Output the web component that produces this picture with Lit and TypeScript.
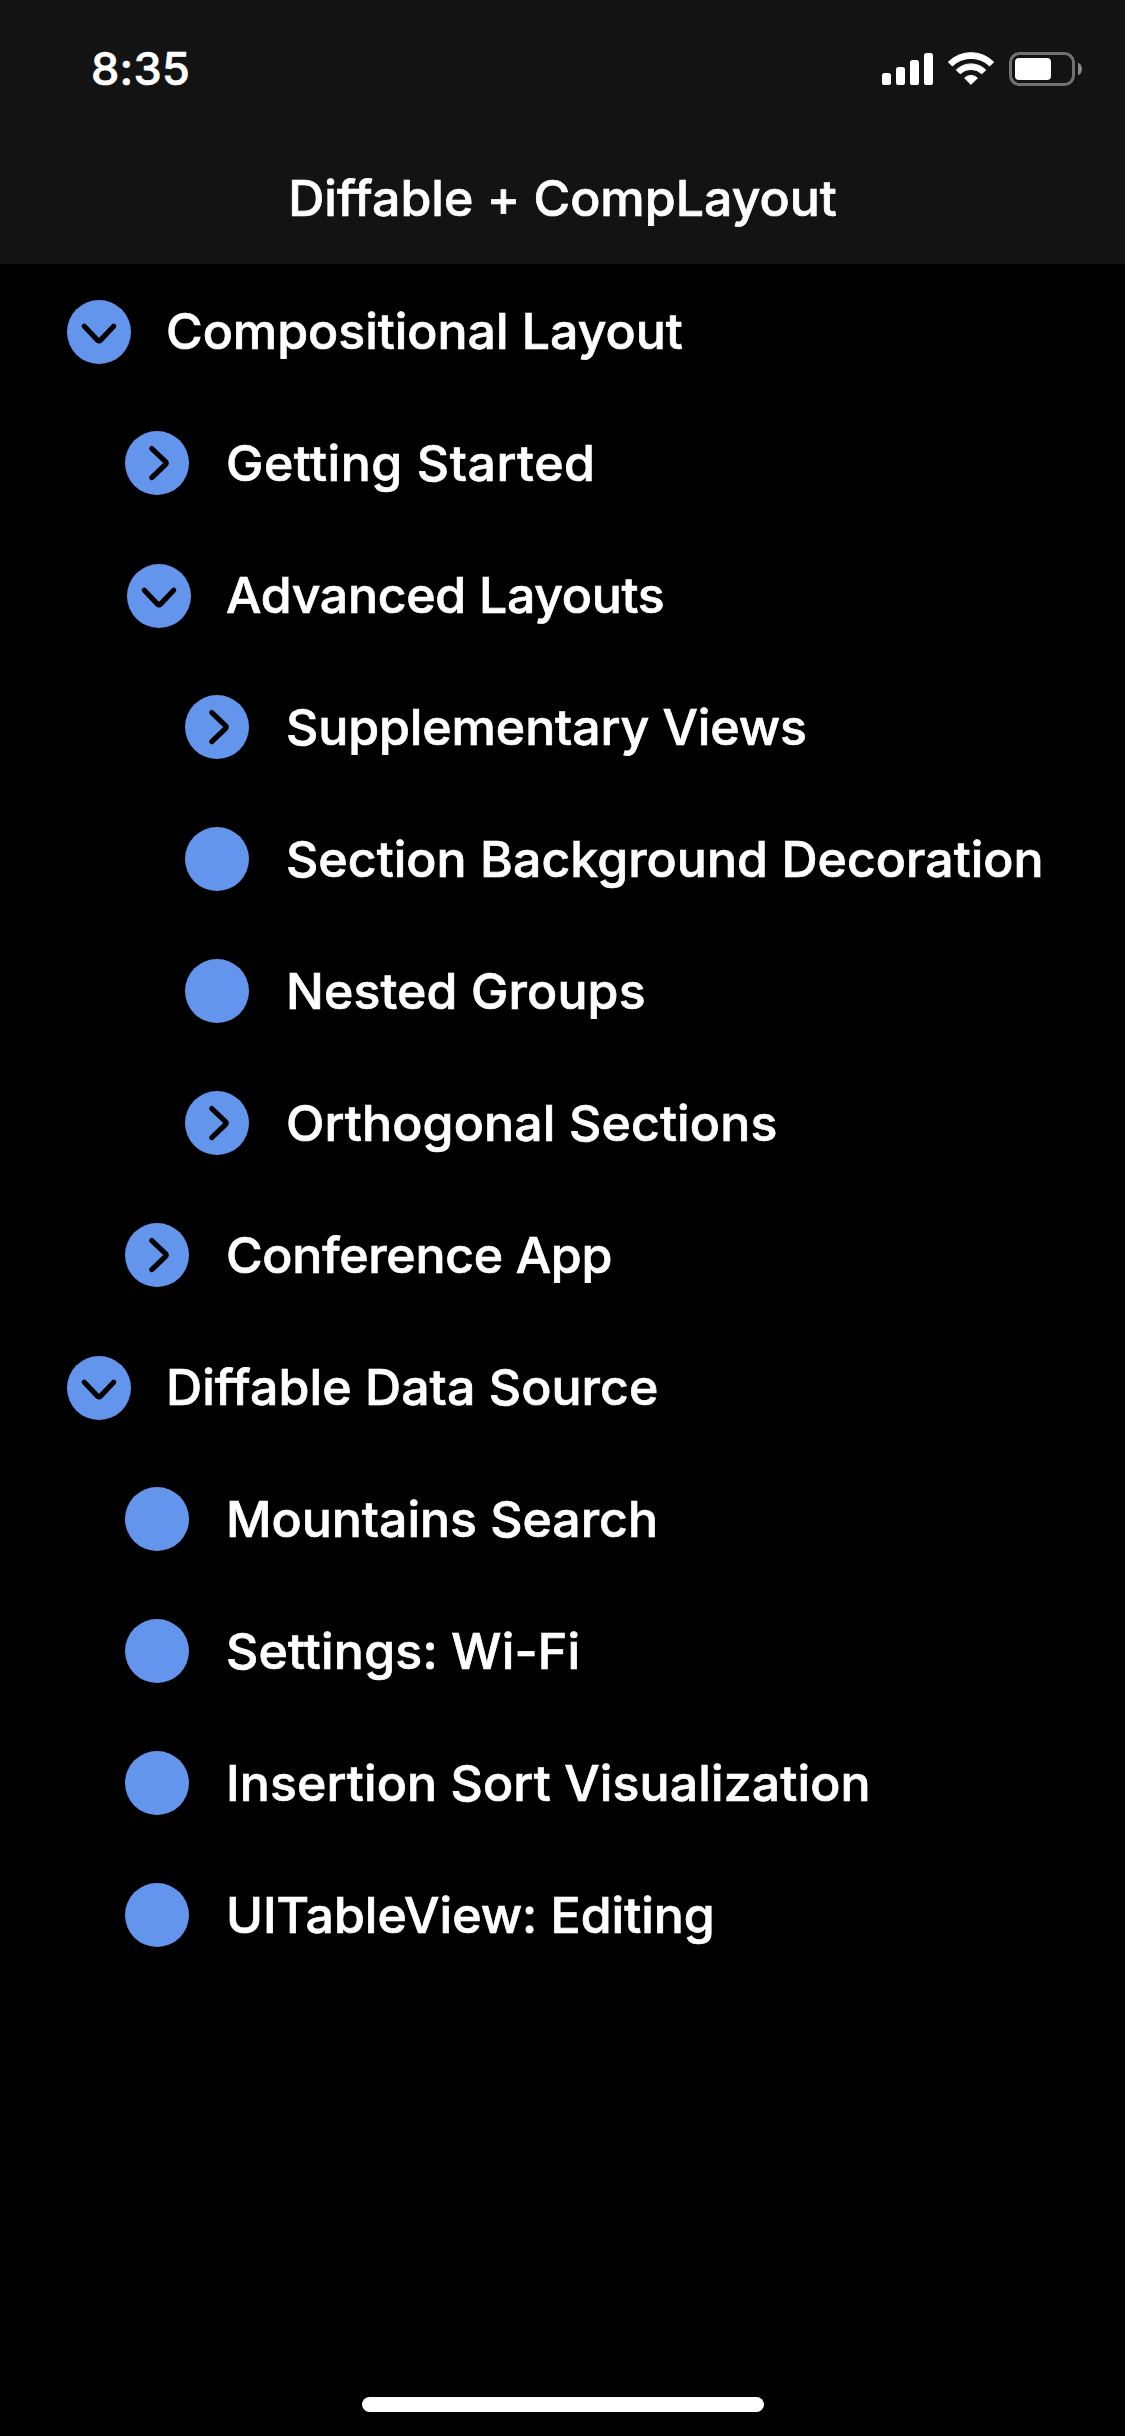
import { LitElement, html, css, svg } from "lit";
import { customElement, property } from "lit/decorators.js";
import { classMap } from "lit/directives/class-map.js";
import { styleMap } from "lit/directives/style-map.js";

type Kind = "expanded" | "collapsed" | "leaf";

interface OutlineItem {
  title: string;
  level: number;
  kind: Kind;
  tracking: number;
}

const ITEMS: OutlineItem[] = [
  { title: "Compositional Layout", level: 0, kind: "expanded", tracking: -0.02 },
  { title: "Getting Started", level: 1, kind: "collapsed", tracking: 0.55 },
  { title: "Advanced Layouts", level: 1, kind: "expanded", tracking: -0.3 },
  { title: "Supplementary Views", level: 2, kind: "collapsed", tracking: -0.1 },
  { title: "Section Background Decoration", level: 2, kind: "leaf", tracking: 0.04 },
  { title: "Nested Groups", level: 2, kind: "leaf", tracking: 0.12 },
  { title: "Orthogonal Sections", level: 2, kind: "collapsed", tracking: 0.14 },
  { title: "Conference App", level: 1, kind: "collapsed", tracking: -0.33 },
  { title: "Diffable Data Source", level: 0, kind: "expanded", tracking: 0.07 },
  { title: "Mountains Search", level: 1, kind: "leaf", tracking: -0.03 },
  { title: "Settings: Wi-Fi", level: 1, kind: "leaf", tracking: 0.19 },
  { title: "Insertion Sort Visualization", level: 1, kind: "leaf", tracking: 0.12 },
  { title: "UITableView: Editing", level: 1, kind: "leaf", tracking: -0.01 },
];

const CHEVRONS = {
  expanded: svg`<path class="chevron" d="M17.3 26.2L30.5 40.1Q32 41.6 33.5 40.1L46.7 26.2"/>`,
  collapsed: svg`<path class="chevron" d="M26.8 17.6L40.5 30.7Q42 32.1 40.5 33.5L26.8 46.6"/>`,
  leaf: null,
};

@customElement("outline-row")
class OutlineRow extends LitElement {
  @property({ attribute: false }) item!: OutlineItem;

  static styles = css`
    :host {
      display: block;
    }
    .row {
      display: flex;
      align-items: center;
      height: 132px;
      padding-left: 65px;
      box-sizing: border-box;
    }
    .level-1 {
      padding-left: 125px;
    }
    .level-2 {
      padding-left: 185px;
    }
    .badge {
      flex: none;
      width: 64px;
      height: 64px;
      margin-right: 37px;
    }
    .expanded .badge {
      margin: 2px 35px 0 2px;
    }
    .disc {
      fill: #6495ed;
    }
    .chevron {
      fill: none;
      stroke: #000;
      stroke-width: 5.2;
      stroke-linecap: round;
      stroke-linejoin: round;
    }
    .title {
      font-size: 50px;
      line-height: 60px;
      font-weight: 500;
      -webkit-text-stroke: 0.7px #fff;
      white-space: nowrap;
    }
  `;

  render() {
    const { title, level, kind, tracking } = this.item;
    return html`<div class=${classMap({ row: true, [`level-${level}`]: true, [kind]: true })}>
      <svg class="badge" viewBox="0 0 64 64">
        <circle class="disc" cx="32" cy="32" r="32"></circle>
        ${CHEVRONS[kind]}
      </svg>
      <span class="title" style=${styleMap({ letterSpacing: `${tracking}px` })}>${title}</span>
    </div>`;
  }
}

@customElement("app-root")
class AppRoot extends LitElement {
  static styles = css`
    :host {
      display: block;
      font-family: Inter, "Liberation Sans", sans-serif;
      color: #fff;
    }
    .screen {
      display: flex;
      flex-direction: column;
      width: 1125px;
      height: 2436px;
      background: #000;
      overflow: hidden;
    }
    .header {
      flex: none;
      height: 264px;
      background: #131313;
      font-weight: 500;
      -webkit-text-stroke: 0.7px #fff;
    }
    .status {
      display: flex;
      align-items: center;
      justify-content: space-between;
      height: 138px;
      padding: 0 43px 0 91px;
    }
    .time {
      font-size: 45px;
      line-height: 54px;
      letter-spacing: 0.3px;
    }
    .icons {
      width: 200px;
      height: 34px;
    }
    .nav-title {
      display: flex;
      align-items: center;
      justify-content: center;
      height: 120px;
      font-size: 50px;
      letter-spacing: 0.02px;
    }
    .list {
      flex: 1;
      padding-top: 1px;
    }
    .footer {
      display: flex;
      justify-content: center;
      padding-bottom: 24px;
    }
    .home {
      width: 402px;
      height: 15px;
      border-radius: 8px;
      background: #fff;
    }
  `;

  render() {
    return html`<div class="screen">
      <div class="header">
        <div class="status">
          <span class="time">8:35</span>
          <svg class="icons" viewBox="0 0 200 34">
            <g fill="#fff">
              <rect x="0" y="21" width="9" height="12" rx="2.6"></rect>
              <rect x="14" y="15" width="9" height="18" rx="2.6"></rect>
              <rect x="28" y="8" width="9" height="25" rx="2.6"></rect>
              <rect x="42" y="1" width="9" height="32" rx="2.6"></rect>
            </g>
            <g fill="#fff" stroke="#fff" stroke-width="1" stroke-linejoin="round">
              <path d="M66.4 10A32 32 0 0 1 111.6 10L107.6 14A26.5 26.5 0 0 0 70.4 14Z"></path>
              <path d="M74.3 17.9A21 21 0 0 1 103.7 17.9L99.8 21.8A15.5 15.5 0 0 0 78.2 21.8Z"></path>
              <path d="M82.6 26A9.2 9.2 0 0 1 95.4 26L89 32.4Z"></path>
            </g>
            <rect x="128.5" y="1.5" width="63" height="31" rx="9" fill="none" stroke="#fff" stroke-opacity="0.4" stroke-width="3"></rect>
            <rect x="133" y="6" width="36" height="22" rx="4" fill="#fff"></rect>
            <path d="M196 10.8Q200 12.6 200 17T196 23.2Z" fill="#fff" fill-opacity="0.5"></path>
          </svg>
        </div>
        <div class="nav-title">Diffable + CompLayout</div>
      </div>
      <div class="list">${ITEMS.map((item) => html`<outline-row .item=${item}></outline-row>`)}</div>
      <div class="footer"><div class="home"></div></div>
    </div>`;
  }
}
